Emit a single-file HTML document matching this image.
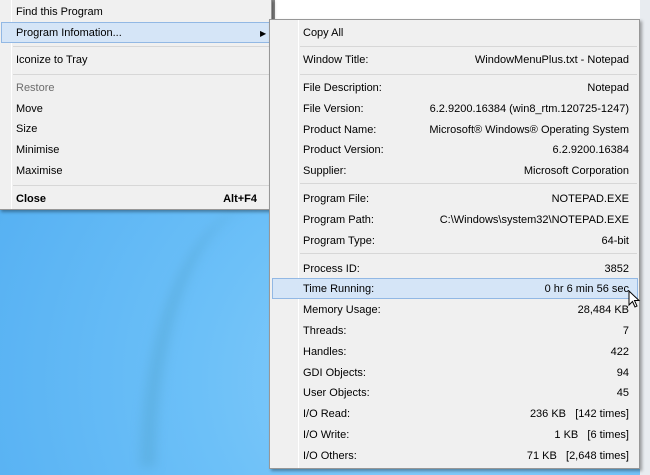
<!DOCTYPE html>
<html><head><style>
*{margin:0;padding:0;box-sizing:border-box}
html,body{width:650px;height:475px;overflow:hidden}
body{position:relative;font-family:"Liberation Sans",sans-serif;font-size:11px;color:#000;
background:radial-gradient(ellipse at 70% 80%,#8fd0fb 0%,#6cc0f8 40%,#4aa8ef 100%)}
.streak{position:absolute;left:140px;top:205px;width:120px;height:262px;border-left:16px solid rgba(80,160,200,.35);border-radius:100% 0 0 0;filter:blur(5px)}
.win{position:absolute;left:272px;top:0;width:368px;height:20px;background:#fff;border-left:3px solid #8c8c8c}
.rwin{position:absolute;left:640px;top:0;width:10px;height:475px;background:#e8ecf0}
.menu{position:absolute;background:#f0f0f0;border:1px solid #979797;box-shadow:2px 2px 3px rgba(0,0,0,.35)}
.row{position:absolute;height:21px;line-height:21px;white-space:nowrap}
.sep{position:absolute;height:1px;background:#d7d7d7}
.hl{position:absolute;background:#d5e5f7;border:1px solid #92b8e4}
.gut{position:absolute;top:0;bottom:0;width:1px;background:#e2e2e2;border-right:1px solid #fff}
.r{position:absolute;right:11px;top:0}
</style></head><body>
<div class="streak"></div>
<div class="win"></div>
<div class="rwin"></div>

<div class="menu" style="left:-1px;top:-1px;width:273px;height:211px">
 <div class="gut" style="left:11px"></div>
 <div class="hl" style="left:1px;top:22px;width:270px;height:21px"></div>
 <div class="row" style="left:16px;top:2px">Find this Program</div>
 <div class="row" style="left:16px;top:23px;width:255px">Program Infomation...<span style="position:absolute;left:244px;top:0;font-size:8px">&#9654;</span></div>
 <div class="sep" style="left:13px;right:2px;top:46px"></div>
 <div class="row" style="left:16px;top:50px">Iconize to Tray</div>
 <div class="sep" style="left:13px;right:2px;top:74px"></div>
 <div class="row" style="left:16px;top:78px;color:#6d6d6d">Restore</div>
 <div class="row" style="left:16px;top:99px">Move</div>
 <div class="row" style="left:16px;top:119px">Size</div>
 <div class="row" style="left:16px;top:140px">Minimise</div>
 <div class="row" style="left:16px;top:161px">Maximise</div>
 <div class="sep" style="left:13px;right:2px;top:185px"></div>
 <div class="row" style="left:16px;top:189px;width:241px;font-weight:bold">Close<span class="r" style="right:0">Alt+F4</span></div>
</div>

<div class="menu" style="left:269px;top:19px;width:371px;height:450px">
 <div class="gut" style="left:28px"></div>
 <div class="hl" style="left:2px;top:258px;width:366px;height:21px"></div>
 <div class="row" style="left:33px;top:3px">Copy All</div>
 <div class="sep" style="left:30px;right:2px;top:26px"></div>
 <div class="row" style="left:33px;top:30px;width:326px">Window Title:<span class="r" style="right:0">WindowMenuPlus.txt - Notepad</span></div>
 <div class="sep" style="left:30px;right:2px;top:54px"></div>
 <div id="rows"></div>
</div>
<script>
var d=[[58,"File Description:","Notepad"],[79,"File Version:","6.2.9200.16384 (win8_rtm.120725-1247)"],[100,"Product Name:","Microsoft\u00ae Windows\u00ae Operating System"],[120,"Product Version:","6.2.9200.16384"],[141,"Supplier:","Microsoft Corporation"],
[169,"Program File:","NOTEPAD.EXE"],[190,"Program Path:","C:\\Windows\\system32\\NOTEPAD.EXE"],[211,"Program Type:","64-bit"],
[239,"Process ID:","3852"],[259,"Time Running:","0 hr 6 min 56 sec"],[280,"Memory Usage:","28,484 KB"],[301,"Threads:","7"],[322,"Handles:","422"],[343,"GDI Objects:","94"],[363,"User Objects:","45"],[384,"I/O Read:","236 KB&nbsp;&nbsp; [142 times]"],[405,"I/O Write:","1 KB&nbsp;&nbsp; [6 times]"],[426,"I/O Others:","71 KB&nbsp;&nbsp; [2,648 times]"]];
var h="";d.forEach(function(r){h+='<div class="row" style="left:33px;top:'+r[0]+'px;width:326px">'+r[1]+'<span class="r" style="right:0">'+r[2]+'</span></div>';});
h+='<div class="sep" style="left:30px;right:2px;top:163px"></div><div class="sep" style="left:30px;right:2px;top:233px"></div>';
document.getElementById("rows").outerHTML=h;
</script>
<svg style="position:absolute;left:628px;top:290px" width="14" height="20" viewBox="0 0 14 20"><path d="M1 1 L1 15 L4.5 11.5 L7 17 L9 16 L6.5 10.5 L11 10.5 Z" fill="#fff" stroke="#000" stroke-width="1"/></svg>
</body></html>
